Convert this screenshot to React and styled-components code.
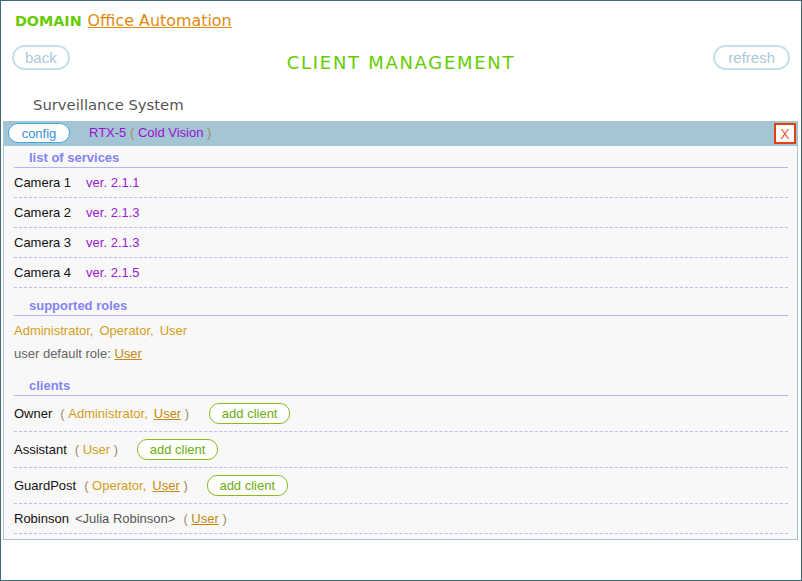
import React from 'react';
import styled, { createGlobalStyle } from 'styled-components';

const GlobalStyle = createGlobalStyle`
  html, body { margin: 0; padding: 0; background: #fff; }
  body { font-family: "Liberation Sans", Arial, sans-serif; font-size: 13px; }
`;

const Frame = styled.div`
  box-sizing: border-box;
  width: 802px;
  height: 581px;
  border: 1px solid #3d6b7a;
  padding: 0 2px 0 2px;
  overflow: hidden;
`;

const DomainLine = styled.div`
  padding: 10px 0 0 12px;
  line-height: 20px;
  font-family: "DejaVu Sans", Verdana, sans-serif;
`;

const DomainLabel = styled.span`
  color: #66cc00;
  font-weight: bold;
  font-size: 14.3px;
  margin-right: 6px;
`;

const DomainLink = styled.a`
  color: #e08a10;
  font-size: 15.9px;
  text-decoration: underline;
  cursor: pointer;
`;

const NavRow = styled.div`
  display: grid;
  grid-template-columns: 1fr auto 1fr;
  align-items: start;
  margin-top: 13px;
  padding: 0 9px;
  height: 25px;
`;

const PillButton = styled.button`
  box-sizing: border-box;
  justify-self: ${(p) => (p.$end ? 'end' : 'start')};
  height: 25px;
  padding: 0 ${(p) => (p.$end ? 13 : 11)}px;
  border: 2px solid #c5dfea;
  border-radius: 13px;
  background: #fff;
  color: #a9c9d9;
  font-family: "Liberation Sans", Arial, sans-serif;
  font-size: 15px;
  line-height: 20px;
  cursor: pointer;
`;

const PageTitle = styled.div`
  margin-top: 8px;
  line-height: 20px;
  font-family: "DejaVu Sans", Verdana, sans-serif;
  font-size: 18px;
  letter-spacing: 1.7px;
  color: #66cc00;
`;

const SystemName = styled.div`
  margin: 26px 0 7px 30px;
  line-height: 18px;
  font-family: "DejaVu Sans", Verdana, sans-serif;
  font-size: 14.8px;
  color: #555;
`;

const Panel = styled.div`
  margin-right: 1px;
  border: 1px solid #a3c5d4;
  background: #f8f8f8;
`;

const PanelBar = styled.div`
  display: flex;
  align-items: flex-start;
  height: 23px;
  padding: 1px 0 0 4px;
  background: #a3c5d4;
`;

const ConfigButton = styled.button`
  box-sizing: border-box;
  width: 62px;
  height: 20px;
  border: 1px solid #3fa9e0;
  border-radius: 10px;
  background: #fff;
  color: #3a92d4;
  font-family: "Liberation Sans", Arial, sans-serif;
  font-size: 13px;
  padding: 0;
  cursor: pointer;
`;

const DeviceName = styled.span`
  margin-left: 19px;
  line-height: 20px;
  color: #9a10d0;
  font-size: 13px;
`;

const Paren = styled.span`
  color: #a08a6a;
`;

const CloseButton = styled.button`
  box-sizing: border-box;
  margin-left: auto;
  margin-right: 1px;
  width: 22px;
  height: 21px;
  padding: 0;
  border: 2px solid #e2400c;
  background: #fff;
  color: #f2603c;
  font-family: "Liberation Sans", Arial, sans-serif;
  font-size: 14px;
  cursor: pointer;
`;

const PanelBody = styled.div`
  padding: 0 9px 5px 10px;
`;

const SectionTitle = styled.div`
  margin-top: ${(p) => (p.$first ? '0' : '6px')};
  padding: 4px 0 2px 15px;
  line-height: 15px;
  border-bottom: 1px solid #b6b6f4;
  color: #8383f2;
  font-weight: bold;
  font-size: 13px;
`;

const Row = styled.div`
  display: flex;
  align-items: center;
  padding: 7px 0;
  line-height: 15px;
  min-height: 15px;
  border-bottom: 1px dashed #bcbcf0;
`;

const Name = styled.span`
  color: #111;
`;

const Version = styled.span`
  margin-left: 15px;
  color: #9a20d0;
`;

const RoleLine = styled.div`
  padding: ${(p) => p.$pad};
  line-height: 15px;
  color: #666;
`;

const Role = styled.span`
  color: #d49e1a;
  margin-right: ${(p) => (p.$last ? '0' : '6px')};
`;

const RoleLink = styled.a`
  color: #c48810;
  text-decoration: underline;
  cursor: pointer;
`;

const Roles = styled.span`
  margin-left: 8px;
`;

const Alias = styled.span`
  margin-left: 6px;
  color: #555;
`;

const AddButton = styled.button`
  box-sizing: border-box;
  height: 21px;
  width: 81px;
  margin-left: ${(p) => p.$gap}px;
  padding: 0;
  border: 1px solid #88bb22;
  border-radius: 10px;
  background: #fff;
  color: #6aad10;
  font-family: "Liberation Sans", Arial, sans-serif;
  font-size: 13px;
  cursor: pointer;
`;

const services = [
  { name: 'Camera 1', ver: '2.1.1' },
  { name: 'Camera 2', ver: '2.1.3' },
  { name: 'Camera 3', ver: '2.1.3' },
  { name: 'Camera 4', ver: '2.1.5' },
];

const clients = [
  { name: 'Owner', roles: ['Administrator'], link: true, add: true, gap: 20 },
  { name: 'Assistant', roles: [], link: false, add: true, gap: 19 },
  { name: 'GuardPost', roles: ['Operator'], link: true, add: true, gap: 19 },
  { name: 'Robinson', alias: '<Julia Robinson>', roles: [], link: true, add: false },
];

const ClientRoles = ({ roles, link }) => (
  <Roles>
    <Paren>(&nbsp;</Paren>
    {roles.map((r) => (
      <Role key={r}>{r},</Role>
    ))}
    {link ? <RoleLink>User</RoleLink> : <Role $last>User</Role>}
    <Paren>&nbsp;)</Paren>
  </Roles>
);

const App = () => (
  <Frame>
    <GlobalStyle />
    <DomainLine>
      <DomainLabel>DOMAIN</DomainLabel>
      <DomainLink>Office Automation</DomainLink>
    </DomainLine>
    <NavRow>
      <PillButton>back</PillButton>
      <PageTitle>CLIENT MANAGEMENT</PageTitle>
      <PillButton $end>refresh</PillButton>
    </NavRow>
    <SystemName>Surveillance System</SystemName>
    <Panel>
      <PanelBar>
        <ConfigButton>config</ConfigButton>
        <DeviceName>
          RTX-5 <Paren>(</Paren> Cold Vision <Paren>)</Paren>
        </DeviceName>
        <CloseButton>X</CloseButton>
      </PanelBar>
      <PanelBody>
        <SectionTitle $first>list of services</SectionTitle>
        {services.map((s) => (
          <Row key={s.name}>
            <Name>{s.name}</Name>
            <Version>ver. {s.ver}</Version>
          </Row>
        ))}
        <SectionTitle>supported roles</SectionTitle>
        <RoleLine $pad="7px 0 0">
          <Role>Administrator,</Role>
          <Role>Operator,</Role>
          <Role $last>User</Role>
        </RoleLine>
        <RoleLine $pad="8px 0 7px">
          user default role: <RoleLink>User</RoleLink>
        </RoleLine>
        <SectionTitle>clients</SectionTitle>
        {clients.map((c) => (
          <Row key={c.name}>
            <Name>{c.name}</Name>
            {c.alias && <Alias>{c.alias}</Alias>}
            <ClientRoles roles={c.roles} link={c.link} />
            {c.add && <AddButton $gap={c.gap}>add client</AddButton>}
          </Row>
        ))}
      </PanelBody>
    </Panel>
  </Frame>
);

export default App;
